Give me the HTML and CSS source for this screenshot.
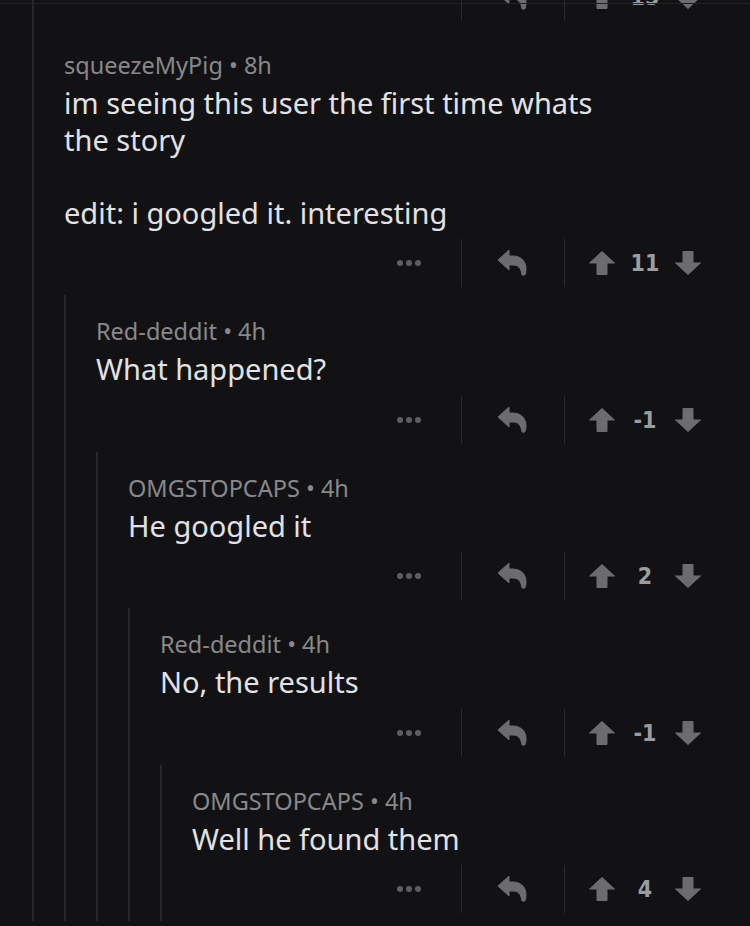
FILE: index.html
```html
<!DOCTYPE html>
<html>
<head>
<meta charset="utf-8">
<link rel="stylesheet" href="styles.css">
</head>
<body>
<div class="topline"></div>
<div class="thread">
  <div class="prev">
    <div class="actions">
      <div class="more"><span class="dot"></span><span class="dot"></span><span class="dot"></span></div>
      <div class="sep"></div>
      <div class="reply"><svg width="30" height="26" viewBox="0 0 30 26"><path d="M0 10 L11 0 V6 H15 C24 6 30 13 27.5 23.5 C27 26 24 26 23.7 23.8 C23 18 20 15 15 15 H11 V20 Z"/></svg></div>
      <div class="sep"></div>
      <div class="votes">
        <svg class="up" width="26" height="24" viewBox="0 0 26 24"><path d="M13 0.5 L25.5 12 H18 V23.5 H8 V12 H0.5 Z"/></svg>
        <span class="count">15</span>
        <svg class="down" width="26" height="24" viewBox="0 0 26 24"><path d="M13 23.5 L25.5 12 H18 V0.5 H8 V12 H0.5 Z"/></svg>
      </div>
    </div>
  </div>

  <div class="comment">
    <div class="head">squeezeMyPig • 8h</div>
    <div class="body">
      <p>im seeing this user the first time whats the story</p>
      <p>edit: i googled it. interesting</p>
    </div>
    <div class="actions">
      <div class="more"><span class="dot"></span><span class="dot"></span><span class="dot"></span></div>
      <div class="sep"></div>
      <div class="reply"><svg width="30" height="26" viewBox="0 0 30 26"><path d="M0 10 L11 0 V6 H15 C24 6 30 13 27.5 23.5 C27 26 24 26 23.7 23.8 C23 18 20 15 15 15 H11 V20 Z"/></svg></div>
      <div class="sep"></div>
      <div class="votes">
        <svg class="up" width="26" height="24" viewBox="0 0 26 24"><path d="M13 0.5 L25.5 12 H18 V23.5 H8 V12 H0.5 Z"/></svg>
        <span class="count">11</span>
        <svg class="down" width="26" height="24" viewBox="0 0 26 24"><path d="M13 23.5 L25.5 12 H18 V0.5 H8 V12 H0.5 Z"/></svg>
      </div>
    </div>
  </div>
  <div class="children">
    <div class="comment">
      <div class="head">Red-deddit • 4h</div>
      <div class="body"><p>What happened?</p></div>
      <div class="actions">
        <div class="more"><span class="dot"></span><span class="dot"></span><span class="dot"></span></div>
        <div class="sep"></div>
        <div class="reply"><svg width="30" height="26" viewBox="0 0 30 26"><path d="M0 10 L11 0 V6 H15 C24 6 30 13 27.5 23.5 C27 26 24 26 23.7 23.8 C23 18 20 15 15 15 H11 V20 Z"/></svg></div>
        <div class="sep"></div>
        <div class="votes">
          <svg class="up" width="26" height="24" viewBox="0 0 26 24"><path d="M13 0.5 L25.5 12 H18 V23.5 H8 V12 H0.5 Z"/></svg>
          <span class="count">-1</span>
          <svg class="down" width="26" height="24" viewBox="0 0 26 24"><path d="M13 23.5 L25.5 12 H18 V0.5 H8 V12 H0.5 Z"/></svg>
        </div>
      </div>
    </div>
    <div class="children">
      <div class="comment">
        <div class="head">OMGSTOPCAPS • 4h</div>
        <div class="body"><p>He googled it</p></div>
        <div class="actions">
          <div class="more"><span class="dot"></span><span class="dot"></span><span class="dot"></span></div>
          <div class="sep"></div>
          <div class="reply"><svg width="30" height="26" viewBox="0 0 30 26"><path d="M0 10 L11 0 V6 H15 C24 6 30 13 27.5 23.5 C27 26 24 26 23.7 23.8 C23 18 20 15 15 15 H11 V20 Z"/></svg></div>
          <div class="sep"></div>
          <div class="votes">
            <svg class="up" width="26" height="24" viewBox="0 0 26 24"><path d="M13 0.5 L25.5 12 H18 V23.5 H8 V12 H0.5 Z"/></svg>
            <span class="count">2</span>
            <svg class="down" width="26" height="24" viewBox="0 0 26 24"><path d="M13 23.5 L25.5 12 H18 V0.5 H8 V12 H0.5 Z"/></svg>
          </div>
        </div>
      </div>
      <div class="children">
        <div class="comment">
          <div class="head">Red-deddit • 4h</div>
          <div class="body"><p>No, the results</p></div>
          <div class="actions">
            <div class="more"><span class="dot"></span><span class="dot"></span><span class="dot"></span></div>
            <div class="sep"></div>
            <div class="reply"><svg width="30" height="26" viewBox="0 0 30 26"><path d="M0 10 L11 0 V6 H15 C24 6 30 13 27.5 23.5 C27 26 24 26 23.7 23.8 C23 18 20 15 15 15 H11 V20 Z"/></svg></div>
            <div class="sep"></div>
            <div class="votes">
              <svg class="up" width="26" height="24" viewBox="0 0 26 24"><path d="M13 0.5 L25.5 12 H18 V23.5 H8 V12 H0.5 Z"/></svg>
              <span class="count">-1</span>
              <svg class="down" width="26" height="24" viewBox="0 0 26 24"><path d="M13 23.5 L25.5 12 H18 V0.5 H8 V12 H0.5 Z"/></svg>
            </div>
          </div>
        </div>
        <div class="children">
          <div class="comment">
            <div class="head">OMGSTOPCAPS • 4h</div>
            <div class="body"><p>Well he found them</p></div>
            <div class="actions">
              <div class="more"><span class="dot"></span><span class="dot"></span><span class="dot"></span></div>
              <div class="sep"></div>
              <div class="reply"><svg width="30" height="26" viewBox="0 0 30 26"><path d="M0 10 L11 0 V6 H15 C24 6 30 13 27.5 23.5 C27 26 24 26 23.7 23.8 C23 18 20 15 15 15 H11 V20 Z"/></svg></div>
              <div class="sep"></div>
              <div class="votes">
                <svg class="up" width="26" height="24" viewBox="0 0 26 24"><path d="M13 0.5 L25.5 12 H18 V23.5 H8 V12 H0.5 Z"/></svg>
                <span class="count">4</span>
                <svg class="down" width="26" height="24" viewBox="0 0 26 24"><path d="M13 23.5 L25.5 12 H18 V0.5 H8 V12 H0.5 Z"/></svg>
              </div>
            </div>
          </div>
        </div>
      </div>
    </div>
  </div>
</div>
</body>
</html>
```
FILE: styles.css
```css
html, body {
  margin: 0;
  padding: 0;
  background: #121214;
  height: 100%;
}
body {
  font-family: "Noto Sans", "Open Sans", sans-serif;
  overflow: hidden;
  position: relative;
}
.topline {
  position: absolute;
  left: 0;
  right: 0;
  top: 3px;
  height: 1px;
  background: #232326;
}
.thread {
  display: flow-root;
  margin-left: 32px;
  border-left: 2px solid #29292b;
  padding-left: 30px;
}
.prev {
  margin-top: -27px;
  padding-bottom: 8px;
}
.children {
  border-left: 2px solid #29292b;
  padding-left: 30px;
}
.comment {
  padding-top: 21px;
  padding-bottom: 8px;
}
.head {
  font-size: 23.5px;
  line-height: 30px;
  color: #88888b;
  white-space: nowrap;
}
.body {
  margin-top: 5px;
  margin-bottom: 8px;
  padding-right: 128px;
  font-size: 29px;
  line-height: 36.5px;
  color: #e2e2e4;
}
.body p {
  margin: 0;
}
.body p + p {
  margin-top: 36.5px;
}
.actions {
  display: flex;
  justify-content: flex-end;
  align-items: stretch;
  height: 48px;
  padding-right: 49px;
}
.sep {
  width: 1px;
  background: #2a2a2c;
}
.more {
  width: 100px;
  padding-right: 4px;
  box-sizing: border-box;
  display: flex;
  justify-content: center;
  align-items: center;
  gap: 3px;
}
.dot {
  width: 6px;
  height: 6px;
  border-radius: 50%;
  background: #5e5e61;
}
.reply {
  width: 102px;
  display: flex;
  justify-content: center;
  align-items: center;
}
.reply svg, .votes svg {
  fill: #6c6c6f;
  stroke: #6c6c6f;
  stroke-width: 1;
  stroke-linejoin: round;
}
.votes {
  display: flex;
  align-items: center;
  padding-left: 24px;
}
.count {
  width: 60px;
  text-align: center;
  font-family: "Liberation Sans Narrow", "DejaVu Sans Condensed", sans-serif;
  font-weight: 700;
  font-size: 23px;
  color: #9c9c9f;
}
```
